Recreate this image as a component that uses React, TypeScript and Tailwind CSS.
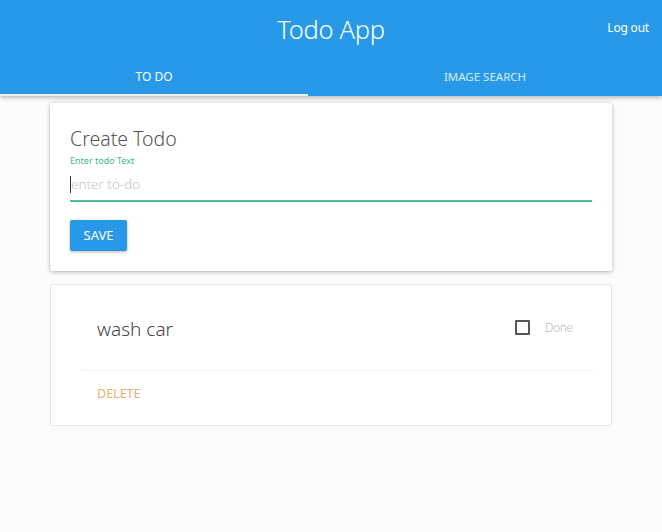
export default function App() {
  return (
    <div
      className="min-h-[532px] bg-[#fbfbfb] text-[#444]"
      style={{ fontFamily: '"Noto Sans", "Open Sans", sans-serif' }}
    >
      <header className="bg-[#2899e9] text-white shadow-[0_2px_4px_rgba(0,0,0,0.25)]">
        <div className="relative h-[60px] flex items-center justify-center">
          <h1 className="text-[25.5px] font-light tracking-[-0.3px] -mt-[2px]">Todo App</h1>
          <button className="absolute right-[13px] top-[19px] text-[12px] font-normal tracking-[-0.2px]">Log out</button>
        </div>
        <nav className="flex h-[36px] text-[12px] uppercase">
          <div className="w-[308px] relative flex items-center justify-center text-white">
            <span className="-mt-[2px]">To Do</span>
            <div className="absolute left-0 right-0 bottom-0 h-[2px] bg-[#f2f2f2]" />
          </div>
          <div className="flex-1 flex items-center justify-center text-white/80">
            <span className="-mt-[2px] text-[11.5px]">Image Search</span>
          </div>
        </nav>
      </header>

      <main className="px-[50px] pt-[7px]">
        <section className="bg-white rounded-[2px] shadow-[0_1px_4px_rgba(0,0,0,0.3)] px-[20px] pt-[22px] pb-[20px]">
          <h2 className="text-[19.5px] font-light text-[#555] leading-[28px]">Create Todo</h2>
          <label className="block text-[9px] text-[#3fb68f] mt-[1px] leading-[14px]">Enter todo Text</label>
          <div className="border-b-2 border-[#4ec294] h-[34px] flex items-center">
            <span className="w-px h-[17px] bg-[#333]" />
            <span className="text-[13.5px] font-light text-[#c4c4c4]">enter to-do</span>
          </div>
          <button className="mt-[18px] h-[31px] w-[57px] bg-[#2899e9] text-white text-[13px] rounded-[2px] shadow-[0_1px_3px_rgba(0,0,0,0.3)]">
            SAVE
          </button>
        </section>

        <section className="mt-[13px] bg-white border border-[#e6e6e6] rounded-[2px] pl-[30px] pr-[17px]">
          <div className="flex items-center h-[85px] pl-[16px] pr-[21px]">
            <span className="flex-1 text-[19px] font-light text-[#444] pt-[3px]">wash car</span>
            <span className="w-[15px] h-[15px] border-2 border-[#555] rounded-[1px]" />
            <span className="ml-[15px] w-[28px] text-[12px] font-light text-[#bbb] tracking-[-0.4px]">Done</span>
          </div>
          <div className="h-px bg-[#f2f2f2]" />
          <div className="h-[54px] flex items-center pl-[16px]">
            <span className="text-[12.5px] text-[#eaae6e] pb-[8px]">DELETE</span>
          </div>
        </section>
      </main>
    </div>
  );
}
